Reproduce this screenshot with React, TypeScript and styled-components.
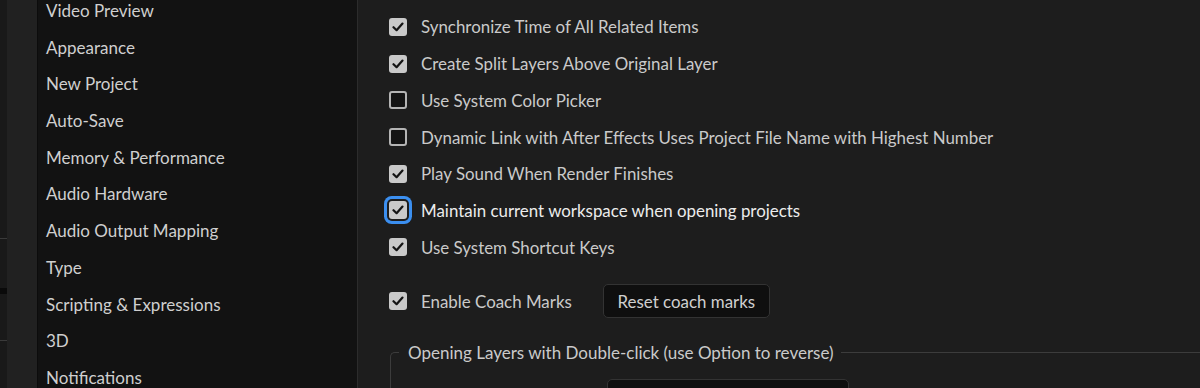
import React from "react"
import styled, { createGlobalStyle } from "styled-components"

const Global = createGlobalStyle`
  html, body { margin: 0; padding: 0; background: #1d1d1d; }
  body { width: 1200px; height: 388px; overflow: hidden; font-family: "Lato", "Noto Sans", sans-serif; }
`

interface Option {
  label: string
  checked: boolean
  focused?: boolean
}

const sections = [
  "Video Preview",
  "Appearance",
  "New Project",
  "Auto-Save",
  "Memory & Performance",
  "Audio Hardware",
  "Audio Output Mapping",
  "Type",
  "Scripting & Expressions",
  "3D",
  "Notifications",
]

const options: Option[] = [
  { label: "Synchronize Time of All Related Items", checked: true },
  { label: "Create Split Layers Above Original Layer", checked: true },
  { label: "Use System Color Picker", checked: false },
  { label: "Dynamic Link with After Effects Uses Project File Name with Highest Number", checked: false },
  { label: "Play Sound When Render Finishes", checked: true },
  { label: "Maintain current workspace when opening projects", checked: true, focused: true },
  { label: "Use System Shortcut Keys", checked: true },
]

const Check = () => (
  <svg width="12" height="10" viewBox="0 0 12 10">
    <path d="M1.5 5.2 L4.6 8.2 L10.5 1.6" fill="none" stroke="#141414" strokeWidth="2.2" strokeLinecap="round" strokeLinejoin="round" />
  </svg>
)

const App = () => {
  return (
    <Window>
      <Global />
      <Gutter>
        <GutterEdge>
          <GutterLine top={238} />
          <GutterBand top={288} />
          <GutterLine top={340} />
        </GutterEdge>
      </Gutter>
      <Sidebar>
        <SectionList>
          {sections.map((s) => (
            <SectionItem key={s}>{s}</SectionItem>
          ))}
        </SectionList>
      </Sidebar>
      <Content>
        <OptionList>
          {options.map((o) => (
            <Row key={o.label}>
              <Box checked={o.checked} focused={o.focused}>
                {o.checked && <Check />}
              </Box>
              <Label focused={o.focused}>{o.label}</Label>
            </Row>
          ))}
        </OptionList>
        <CoachRow>
          <Box checked>
            <Check />
          </Box>
          <Label>Enable Coach Marks</Label>
          <Button>Reset coach marks</Button>
        </CoachRow>
        <Group>
          <Legend>Opening Layers with Double-click (use Option to reverse)</Legend>
          <SelectBox />
        </Group>
      </Content>
    </Window>
  )
}

export default App

const Window = styled.div`
  display: flex;
  width: 1200px;
  height: 388px;
  overflow: hidden;
  background: #1d1d1d;
`
const Gutter = styled.div`
  width: 37px;
  flex-shrink: 0;
  background: #212121;
  border-right: 1px solid #0c0c0c;
`
const GutterEdge = styled.div`
  width: 7px;
  height: 100%;
  background: #191919;
  position: relative;
`
const GutterLine = styled.div<{ top: number }>`
  position: absolute;
  left: 0;
  width: 7px;
  top: ${({ top }) => top}px;
  height: 1px;
  background: #3a3a3a;
`
const GutterBand = styled.div<{ top: number }>`
  position: absolute;
  left: 0;
  width: 7px;
  top: ${({ top }) => top}px;
  height: 6px;
  background: #0a0a0a;
`
const Sidebar = styled.div`
  width: 319px;
  flex-shrink: 0;
  background: #121212;
  border-right: 1px solid #2c2c2c;
`
const SectionList = styled.div`
  margin-top: -7px;
  padding-left: 8px;
  display: flex;
  flex-direction: column;
`
const SectionItem = styled.div`
  height: 36.7px;
  line-height: 36.7px;
  font-size: 17px;
  color: #cfcfcf;
  white-space: nowrap;
`
const Content = styled.div`
  flex: 1;
  padding: 8.6px 0 0 31px;
  display: flex;
  flex-direction: column;
`
const OptionList = styled.div`
  display: flex;
  flex-direction: column;
`
const Row = styled.div`
  height: 36.7px;
  display: flex;
  align-items: center;
`
const CoachRow = styled(Row)`
  margin-top: 19px;
`
const Box = styled.div<{ checked?: boolean; focused?: boolean }>`
  width: 18px;
  height: 18px;
  box-sizing: border-box;
  border-radius: 3px;
  flex-shrink: 0;
  display: flex;
  align-items: center;
  justify-content: center;
  background: ${({ checked }) => (checked ? "#c9c9c9" : "#141414")};
  border: ${({ checked }) => (checked ? "none" : "2px solid #b4b4b4")};
  box-shadow: ${({ focused }) => (focused ? "0 0 0 2px #1d1d1d, 0 0 0 5px #3b8ff0" : "none")};
`
const Label = styled.span<{ focused?: boolean }>`
  margin-left: 14px;
  font-size: 16.9px;
  color: ${({ focused }) => (focused ? "#ececec" : "#cacaca")};
  white-space: nowrap;
`
const Button = styled.div`
  margin-left: 31px;
  height: 34px;
  width: 167px;
  box-sizing: border-box;
  display: flex;
  align-items: center;
  justify-content: center;
  background: #0f0f0f;
  border: 1px solid #333;
  border-radius: 5px;
  font-size: 16.9px;
  color: #cfcfcf;
`
const Group = styled.fieldset`
  margin: 24px 0 0 1px;
  padding: 0;
  border: 1px solid #3c3c3c;
  border-right: none;
  border-bottom: none;
  border-radius: 5px 0 0 0;
  min-height: 60px;
`
const Legend = styled.legend`
  padding: 0 7px 0 9px;
  margin-left: 8px;
  font-size: 17px;
  color: #cacaca;
`
const SelectBox = styled.div`
  margin: 16px 0 0 216px;
  width: 240px;
  height: 30px;
  background: #0f0f0f;
  border: 1px solid #333;
  border-radius: 5px;
`
